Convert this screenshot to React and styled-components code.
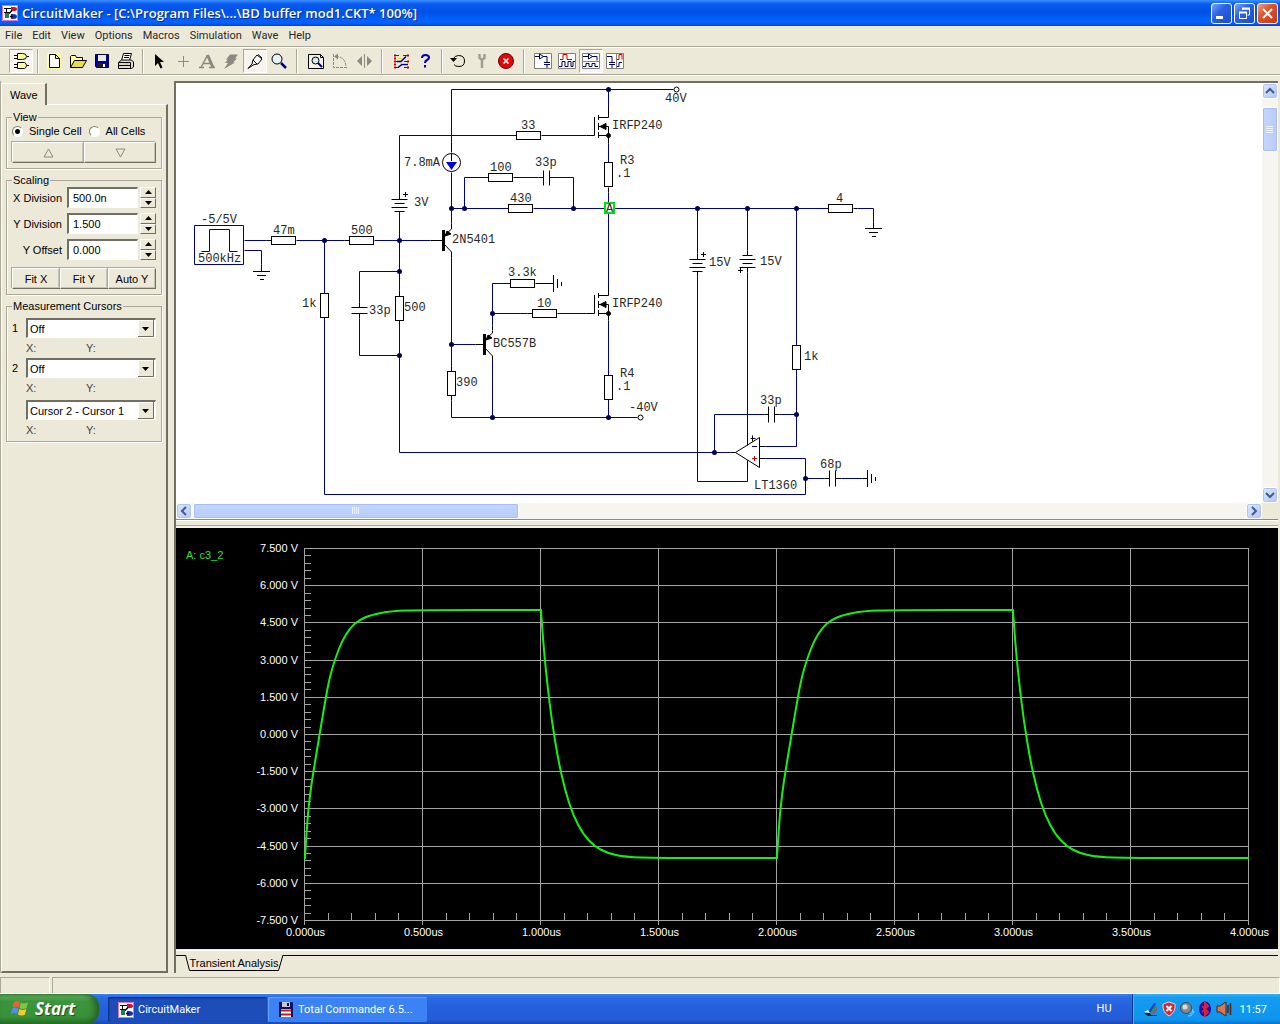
import React, { useState } from 'react';
import styled, { createGlobalStyle, css } from 'styled-components';

const GlobalStyle = createGlobalStyle`
  * { box-sizing: border-box; }
  body {
    margin: 0;
    background: #ece9d8;
    color: #000;
    font-family: "Liberation Sans", Arial, sans-serif;
    font-size: 11px;
  }
  button, input, select { font: inherit; color: inherit; }
`;

/* ---------- data ---------- */

const MENUS = ['File', 'Edit', 'View', 'Options', 'Macros', 'Simulation', 'Wave', 'Help'];

const WIRES = [
  'M451 142V89H673', 'M608 89V108', 'M451 172V223', 'M399 199V135H516', 'M541 135H586',
  'M464 208V177H488', 'M513 177H538', 'M549 177H573V208', 'M451 208H508', 'M533 208H604',
  'M614 208H828', 'M857 208H873V222', 'M608 143V162', 'M608 192V202', 'M608 213V290',
  'M608 320V375', 'M608 399V417', 'M451 417H637', 'M451 257V366', 'M451 400V417',
  'M244 240H266', 'M296 240H344', 'M374 240H430', 'M244 250H261V264', 'M399 211V290',
  'M399 320V452H730', 'M399 271H359V302', 'M359 318V355H399', 'M324 240V293',
  'M324 317V494H805V458H765', 'M492 325V283H510', 'M492 313H527', 'M557 313H586',
  'M451 344H475', 'M492 357V417', 'M697 208V253', 'M697 276V481H747V465',
  'M747 208V250', 'M747 272V440', 'M796 208V345', 'M796 369V446H765',
  'M714 452V414H764', 'M779 414H796', 'M805 478H824', 'M841 478H862',
];

const LEADS = [
  'M451 142V152', 'M451 223V228', 'M451 252V257', 'M430 240H443', 'M475 344H484',
  'M586 135H594', 'M586 313H594', 'M608 135V143', 'M608 187V192', 'M608 313V320',
  'M538 177H543', 'M266 240H271', 'M344 240H349', 'M261 264V271', 'M399 290V296',
  'M359 302V307', 'M359 313V318', 'M451 366V371', 'M451 395V400', 'M492 325V330',
  'M527 313H532', 'M535 283H553', 'M697 253V259', 'M697 271V276', 'M747 250V255',
  'M747 267V272', 'M747 440V445', 'M747 460V465', 'M730 452H736', 'M759 446H765',
  'M759 458H765', 'M764 414H768', 'M774 414H779', 'M824 478H829', 'M835 478H841',
  'M862 478H867', 'M853 208H857', 'M873 222V228',
];

const NODES = [
  [608, 89], [451, 208], [464, 208], [573, 208], [697, 208], [747, 208], [796, 208],
  [324, 240], [399, 240], [399, 271], [399, 355], [451, 344], [492, 313], [492, 417],
  [608, 417], [714, 452], [796, 414], [805, 478],
];

// top left corner of every resistor body
const FLAT_RESISTORS = [[516, 131], [488, 173], [508, 204], [828, 204], [271, 236], [349, 236], [510, 279], [532, 309]];
const TALL_RESISTORS = [[604, 162], [604, 375], [447, 371], [395, 296], [320, 293], [792, 345]];

const LABELS = [
  ['40V', 665, 102], ['33', 521, 129], ['IRFP240', 612, 129], ['7.8mA', 404, 166],
  ['R3', 620, 164], ['.1', 616, 177], ['100', 490, 171], ['33p', 535, 166],
  ['430', 510, 202], ['3V', 414, 206], ['47m', 273, 234], ['500', 351, 234],
  ['2N5401', 452, 243], ['-5/5V', 201, 223], ['500kHz', 198, 262], ['1k', 302, 307],
  ['33p', 369, 314], ['500', 404, 311], ['3.3k', 508, 276], ['10', 537, 307],
  ['IRFP240', 612, 307], ['BC557B', 493, 347], ['390', 456, 386], ['R4', 620, 377],
  ['.1', 616, 390], ['-40V', 629, 411], ['15V', 709, 266], ['15V', 760, 265],
  ['4', 836, 202], ['1k', 804, 360], ['33p', 760, 404], ['68p', 820, 468],
  ['LT1360', 754, 489],
];

const VOLTS = ['7.500 V', '6.000 V', '4.500 V', '3.000 V', '1.500 V', '0.000 V', '-1.500 V', '-3.000 V', '-4.500 V', '-6.000 V', '-7.500 V'];
const TIMES = ['0.000us', '0.500us', '1.000us', '1.500us', '2.000us', '2.500us', '3.000us', '3.500us', '4.000us'];

// one rise and one fall of the output, as offsets from the edge
const RISE = [[0, 858], [2, 824], [5, 794], [9, 768], [14, 738], [19, 708], [24, 680], [30, 659], [37, 641], [45, 628], [54, 620], [66, 615], [86, 611], [117, 610], [235, 610]];
const FALL = [[0, 610], [2, 640], [6, 682], [11, 722], [17, 759], [24, 790], [32, 815], [42, 834], [53, 846], [66, 853], [84, 857], [117, 858], [235, 858]];

/* ---------- toolbar icons ---------- */

const Icon = styled.svg`
  display: block;
  width: 20px;
  height: 20px;
  fill: none;
  stroke: #000;
`;

const ICONS = {
  gates: (
    <Icon viewBox="0 0 20 20">
      <path d="M6.5 2.5h5q4 0 4 3t-4 3h-5zM6.5 11.5h7q2 1 2 3t-2 3h-7z" fill="#ffffa0" />
      <path d="M3 4.5h3M3 7.5h3M16 5.5h2M3 13.5h3M3 16.5h3M16 14.5h2" />
    </Icon>
  ),
  new: (
    <Icon viewBox="0 0 20 20">
      <path d="M3 2h14v16H3z" fill="#ffff9c" stroke="none" />
      <path d="M5.5 3.5h6l4 4v9h-10zM11.5 3.5v4h4" fill="#fff" />
    </Icon>
  ),
  open: (
    <Icon viewBox="0 0 20 20">
      <path d="M2.5 16.5v-11l1-1h4l1 2h6v3" fill="#ffff9c" />
      <path d="M2.5 16.5l4-7h12l-4 7z" fill="#e8dc50" />
    </Icon>
  ),
  save: (
    <Icon viewBox="0 0 20 20">
      <path d="M3.5 3.5h13v13h-12l-1-1z" fill="#0000a0" stroke="#000040" />
      <path d="M6 4h8v6H6z" fill="#ece9d8" stroke="none" />
      <path d="M6 12h8v4H6z" fill="#202020" stroke="none" />
      <path d="M11 13h2v3h-2z" fill="#fff" stroke="none" />
    </Icon>
  ),
  print: (
    <Icon viewBox="0 0 20 20">
      <path d="M5.5 9.5l2-7h8l-2 7" fill="#fff" />
      <path d="M8.5 4.5h5M8 6.5h5" />
      <path d="M2.5 11.5l3-2.5h10l2 2v5l-2 1.5h-13zM2.5 11.5h12v6M3 14.5h11" fill="#dedac8" />
      <path d="M9 13h3" stroke="#d0c000" />
    </Icon>
  ),
  arrow: (
    <Icon viewBox="0 0 20 20">
      <path d="M6 3v12l3-3 2.5 5.5 2-1L11 11h4z" fill="#000" stroke="none" />
    </Icon>
  ),
  plus: <Icon viewBox="0 0 20 20"><path d="M10.5 5v11M5 10.5h11" stroke="#8c8a80" /></Icon>,
  text: (
    <Icon viewBox="0 0 20 20">
      <path d="M4 16.5L10.5 4M6.5 12.5h7M2 16.5h5M12 16.5h6" stroke="#8c8a80" strokeWidth="1.5" />
      <path d="M10.5 4L16 16.5" stroke="#8c8a80" strokeWidth="3" />
    </Icon>
  ),
  bolt: (
    <Icon viewBox="0 0 20 20">
      <path d="M9 3.5h8l-3 4h2l-4 4h2L3 18l4-6H4l3-3.5H5z" fill="#8c8a80" stroke="none" />
    </Icon>
  ),
  probe: (
    <Icon viewBox="0 0 20 20">
      <path d="M3 17.5l4-4.5 1-4 4-5 5 4-4 5-4 .5z" fill="#fff" />
      <path d="M13 3.5l4 3.5M8 9l4 4" />
    </Icon>
  ),
  zoom: (
    <Icon viewBox="0 0 20 20">
      <circle cx="8" cy="8" r="5" fill="#e2f4f4" />
      <path d="M12 12l5 5" stroke="#000090" strokeWidth="2.5" />
    </Icon>
  ),
  fit: (
    <Icon viewBox="0 0 20 20">
      <path d="M2.5 3.5h12l3 3v11h-15z" fill="#f4f2e8" />
      <circle cx="9.5" cy="9.5" r="3.5" fill="#d4ecec" />
      <path d="M12 12l4 4" stroke="#000080" strokeWidth="2" />
      <path d="M14.5 3.5v3h3" />
    </Icon>
  ),
  rotate: (
    <Icon viewBox="0 0 20 20">
      <path d="M3.5 3v13.5H18M6 5.5q9 0 10 10" stroke="#8c8a80" strokeDasharray="3 1" />
      <path d="M4 5.5l4-3v6z" fill="#8c8a80" stroke="none" />
    </Icon>
  ),
  mirror: (
    <Icon viewBox="0 0 20 20">
      <path d="M10.5 3v14" stroke="#8c8a80" />
      <path d="M8 5v10l-5-5zM13 5v10l5-5z" fill="#8c8a80" stroke="none" />
    </Icon>
  ),
  trace: (
    <Icon viewBox="0 0 20 20">
      <path d="M3 4.5h5M3 10.5h4M3 16.5h5M12 4.5h5M13 10.5h4M13 16.5h4" stroke="#a00000" />
      <path d="M6 10.5h4l5-5M7 16.5l4-3h6" stroke="#000090" strokeWidth="1.5" />
      <path d="M3 4.5h2M3 10.5h2M3 16.5h2M16 4.5h2M16 10.5h2M16 16.5h2M3 7.5h2M3 13.5h2" stroke="#c00000" strokeWidth="2" />
      <path d="M9 12.5h7M7 7.5h4" stroke="#f0d820" />
    </Icon>
  ),
  help: (
    <Icon viewBox="0 0 20 20">
      <path d="M7 7q0-3 3.5-3t3.5 2.5q0 1.5-2 2.5t-2 3" stroke="#0000b8" strokeWidth="2" />
      <path d="M9 14h2v2.5H9z" fill="#0000b8" stroke="none" />
    </Icon>
  ),
  undo: (
    <Icon viewBox="0 0 20 20">
      <path d="M5 8Q7 4.5 10.5 4.5q6 0 6 5.5t-5.5 5.5q-4 0-5-2" />
      <path d="M2 7h7l-3.5 4z" fill="#000" stroke="none" />
    </Icon>
  ),
  wrench: (
    <Icon viewBox="0 0 20 20">
      <path d="M7.5 3v4l2.5 2 2.5-2V3M10 9v8" stroke="#a09e92" strokeWidth="2.5" />
    </Icon>
  ),
  stop: (
    <Icon viewBox="0 0 20 20">
      <circle cx="10" cy="10" r="7.5" fill="#e00808" stroke="#600" />
      <path d="M7.5 7.5l5 5M12.5 7.5l-5 5" stroke="#fff" strokeWidth="1.5" />
    </Icon>
  ),
  viewCircuit: (
    <Icon viewBox="0 0 20 20">
      <path d="M1.5 2.5h17v15h-17z" fill="#fff" stroke="#808080" />
      <path d="M2 5.5h4M6.5 3v5l4-2.5zM10 5.5h4v6M11 11.5h6M11 13.5h6M14 14v3" stroke="#000060" />
    </Icon>
  ),
  viewWaves: (
    <Icon viewBox="0 0 20 20">
      <path d="M1.5 2.5h17v15h-17z" fill="#fff" stroke="#808080" />
      <path d="M3 8.5h3v-5h4v5h5" stroke="#c00000" />
      <path d="M2 15.5h3v-5h3v5h3v-5h3v5h2v-5h2" stroke="#000060" />
    </Icon>
  ),
  viewSplit: (
    <Icon viewBox="0 0 20 20">
      <path d="M1.5 2.5h17v15h-17zM1.5 10.5h17" fill="#fff" stroke="#808080" />
      <path d="M2 5.5h5M7.5 3v5l4-2.5zM11 5.5h5v4M2 15.5h3v-3h3v3h3v-3h3v3h3" stroke="#000060" />
    </Icon>
  ),
  viewColumns: (
    <Icon viewBox="0 0 20 20">
      <path d="M1.5 2.5h17v15h-17zM11.5 2.5v15" fill="#fff" stroke="#808080" />
      <path d="M2 5.5h5v6M4 11.5h6M4 13.5h6M7 14v3M12 15.5h2v-4h3" stroke="#000060" />
      <path d="M12 8.5h2v-5h3v5" stroke="#c00000" />
    </Icon>
  ),
};

// 'sep' is a divider, 'wide' is one with more room around it
const TOOLBAR = [
  ['gates', true], 'sep', ['new'], ['open'], ['save'], ['print'], 'sep', ['arrow'], ['plus'], ['text'],
  ['bolt'], ['probe', true], ['zoom'], 'wide', ['fit'], ['rotate'], ['mirror'], 'wide', ['trace'], ['help'],
  'sep', ['undo'], ['wrench'], ['stop'], 'wide', ['viewCircuit'], ['viewWaves'], ['viewSplit', true], ['viewColumns'],
];

const AppLogo = () => (
  <svg width="16" height="16" viewBox="0 0 16 16">
    <path d="M0 0h16v16H0z" fill="#fff" />
    <path d="M.5 .5h15v15H.5z" fill="none" stroke="#e070c8" />
    <path d="M2 3.5h9M4.5 3v10M2 7.5h5" stroke="#000" />
    <path d="M9 2h3q3 0 3 2t-3 2H9z" fill="#d01030" />
    <path d="M3 8h4v5H3z" fill="#208048" />
    <path d="M9 9h2q4 0 4 2.5T11 14H9z" fill="#1030c0" />
    <path d="M7 8.5l3-3M8 11.5h3" stroke="#000" strokeWidth="1.5" />
  </svg>
);

/* ---------- frame ---------- */

const Desktop = styled.div`
  display: flex;
  flex-direction: column;
  height: 100vh;
  overflow: hidden;
`;

const TitleBar = styled.header`
  display: flex;
  align-items: center;
  gap: 4px;
  height: 26px;
  padding: 0 2px;
  background: linear-gradient(#3a90ff 0, #0a5cf0 15%, #0050e4 45%, #0062fc 75%, #0660ff 88%, #0044d0 100%);
`;

const Title = styled.h1`
  flex: 1;
  margin: 0;
  color: #fff;
  font-family: "Open Sans", "Noto Sans", sans-serif;
  font-size: 13px;
  font-weight: 600;
  line-height: 24px;
  white-space: nowrap;
  text-shadow: 1px 1px 0 #0a2a90;
`;

const WindowButtons = styled.div`
  display: flex;
  gap: 2px;
`;

const WindowButton = styled.button`
  width: 21px;
  height: 21px;
  padding: 0;
  border: 1px solid #fff;
  border-radius: 3px;
  background: ${({ $close }) => ($close
    ? 'linear-gradient(135deg, #f0a088, #e0522c 40%, #c83c10)'
    : 'linear-gradient(135deg, #7ca4f8, #2c62e4 40%, #1a4cd0)')};

  svg { display: block; fill: none; stroke: #fff; }
`;

const MenuBar = styled.nav`
  display: flex;
  height: 20px;
  align-items: center;
`;

const MenuButton = styled.button`
  padding: 0 5px;
  border: 0;
  background: none;
  color: #282828;
  font-family: Roboto, sans-serif;
  font-size: 11px;
  line-height: 18px;
`;

const Toolbar = styled.div`
  display: flex;
  align-items: center;
  height: 30px;
  padding-left: 9px;
  border-top: 1px solid #aca899;
  border-bottom: 1px solid #fff;
  box-shadow: inset 0 1px 0 #fff, inset 0 -1px 0 #aca899;
`;

const ToolButton = styled.button`
  display: grid;
  place-items: center;
  flex: none;
  width: 24px;
  height: 24px;
  padding: 0;
  border: 1px solid transparent;
  background: none;

  ${({ $pressed }) => $pressed && css`
    border-color: #aca899 #fff #fff #aca899;
    background: #f6f4ec;
  `}
`;

const ToolDivider = styled.span`
  flex: none;
  width: 2px;
  height: 24px;
  margin: ${({ $wide }) => ($wide ? '0 6px 0 5px' : '0 3px 0 4px')};
  border-left: 1px solid #aca899;
  border-right: 1px solid #fff;
`;

const Main = styled.main`
  display: flex;
  flex: 1;
  min-height: 0;
  gap: 6px;
  padding: 5px 2px 3px 0;
`;

/* ---------- side panel ---------- */

const Side = styled.aside`
  display: flex;
  flex-direction: column;
  flex: none;
  width: 168px;
  padding-top: 2px;
  border-left: 1px solid #aca899;
`;

const SideTab = styled.button`
  align-self: flex-start;
  height: 22px;
  margin-bottom: -1px;
  padding: 0 7px 0 8px;
  border: solid;
  border-width: 1px 2px 0 1px;
  border-color: #fff #716f64 #fff #fff;
  background: #ece9d8;
  z-index: 1;
`;

const SideBody = styled.div`
  display: flex;
  flex-direction: column;
  flex: 1;
  gap: 5px;
  padding: 6px 4px 0;
  border: solid;
  border-width: 1px 2px 2px 1px;
  border-color: #fff #716f64 #716f64 #fff;
`;

const Group = styled.fieldset`
  min-width: 0;
  margin: 0;
  padding: 0 5px ${({ $tight }) => ($tight ? '1px' : '5px')};
  border: 1px solid #aca899;
  box-shadow: 1px 1px 0 #fff, inset 1px 0 0 #fff;

  legend {
    margin-bottom: 1px;
    padding: 0 1px;
    line-height: 12px;
  }
`;

const RadioRow = styled.div`
  display: flex;
  align-items: center;
  gap: 7px;
  height: 14px;
  margin-bottom: 4px;
`;

const RadioLabel = styled.label`
  display: flex;
  align-items: center;
  gap: 6px;
  white-space: nowrap;
`;

const Radio = styled.input`
  appearance: none;
  width: 11px;
  height: 11px;
  margin: 0;
  border: 1px solid;
  border-color: #808070 #fff #fff #808070;
  border-radius: 50%;
  background: #fff;

  &:checked { background: radial-gradient(circle, #000 2px, #fff 3px); }
`;

const ButtonRow = styled.div`
  display: flex;
`;

const PushButton = styled.button`
  flex: 1;
  height: 21px;
  padding: 0;
  border: 1px solid;
  border-color: #fff #716f64 #716f64 #fff;
  background: #ece9d8;
  box-shadow: -1px -1px 0 #aca899, inset -1px -1px 0 #c8c4b4;

  svg { display: block; margin: 0 auto; fill: none; stroke: #8c8a80; }
`;

const Field = styled.div`
  display: grid;
  grid-template-columns: 1fr 71px 16px;
  column-gap: 2px;
  align-items: center;
  margin-bottom: 5px;

  label {
    padding-right: 3px;
    text-align: right;
    white-space: nowrap;
  }
`;

const sunken = css`
  border: solid;
  border-width: 2px 1px 1px 2px;
  border-color: #716f64 #fff #fff #716f64;
  background: #fff;
`;

const TextBox = styled.input`
  width: 100%;
  height: 21px;
  padding: 0 4px;
  ${sunken}
`;

const Spinner = styled.div`
  display: grid;
  grid-template-rows: 1fr 1fr;
  height: 21px;

  button {
    padding: 0;
    border: 1px solid;
    border-color: #fff #716f64 #716f64 #fff;
    background: #ece9d8;
  }
  svg { display: block; margin: 0 auto; }
`;

const FitRow = styled(ButtonRow)`
  margin-top: 8px;
`;

const Cursor = styled.div`
  display: grid;
  grid-template-columns: 14px 1fr;
  align-items: center;

  &:first-of-type { margin-top: 5px; }
  &:last-of-type { margin-top: 2px; }
`;

const Combo = styled.div`
  display: grid;
  align-items: center;

  select, svg { grid-area: 1 / 1; }
  svg {
    justify-self: end;
    margin-right: 2px;
    pointer-events: none;
  }
`;

const Select = styled.select`
  appearance: none;
  width: 100%;
  height: 20px;
  padding: 0 2px;
  border-radius: 0;
  ${sunken}
`;

const Readout = styled.div`
  display: grid;
  grid-template-columns: 60px 1fr;
  grid-column: 2;
  line-height: 20px;
  color: #444;
`;

/* ---------- workspace ---------- */

const Workspace = styled.section`
  display: grid;
  flex: 1;
  min-width: 0;
  grid-template-rows: minmax(0, 1fr) 9px 421px 24px;
  border: solid #716f64;
  border-width: 2px 0 0 2px;
`;

const SchematicPane = styled.div`
  display: grid;
  grid-template-columns: minmax(0, 1fr) 16px;
  grid-template-rows: minmax(0, 1fr) 16px;
`;

const Sheet = styled.div`
  overflow: hidden;
  background: #fff;

  svg { display: block; }
  text {
    fill: #282828;
    font-family: "Liberation Mono", monospace;
    font-size: 12px;
  }
`;

const Scrollbar = styled.div`
  display: flex;
  flex-direction: ${({ $vertical }) => ($vertical ? 'column' : 'row')};
  background: #f6f5ef;
`;

const ScrollButton = styled.button`
  flex: none;
  width: 16px;
  height: 16px;
  padding: 0;
  border: 1px solid #fff;
  border-radius: 3px;
  background: linear-gradient(135deg, #dce6ff, #b4c8f6);
  box-shadow: inset 0 0 0 1px #b0c4f0;

  &:last-child { margin-${({ $vertical }) => ($vertical ? 'top' : 'left')}: auto; }
  svg { display: block; fill: none; stroke: #405c90; stroke-width: 2; }
`;

const Thumb = styled.div`
  display: grid;
  place-items: center;
  border: 1px solid #fff;
  border-radius: 2px;
  background: linear-gradient(${({ $vertical }) => ($vertical ? '90deg' : '180deg')}, #c4d6fe, #b8ccfa);
  box-shadow: inset 0 0 0 1px #a8bef0;
  ${({ $vertical }) => ($vertical
    ? css`height: 45px; margin-top: 8px;`
    : css`width: 30%; margin-left: 1px;`)}
`;

const Splitter = styled.div`
  border-top: 1px solid #8c8a7c;
  border-bottom: 2px solid #f4f2e8;
  box-shadow: inset 0 1px 0 #fff, inset 0 -1px 0 #aca899;
`;

const WavePane = styled.div`
  min-width: 0;
  background: #000;

  svg { display: block; width: 100%; height: 100%; }
`;

const ChartText = styled.text`
  fill: ${({ $color }) => $color || '#fff'};
  font-family: "Liberation Sans", Arial, sans-serif;
  font-size: 11px;
`;

const SheetTabs = styled.div`
  display: flex;
  margin-top: 6px;
  border-top: 1px solid #000;
  box-shadow: 0 -4px 0 #ece9d8, 0 -5px 0 #fff;
  background: #ece9d8;
`;

const SheetTab = styled.button`
  display: grid;
  align-self: flex-start;
  margin: -1px 0 0 9px;
  padding: 0;
  border: 0;
  background: none;

  svg, span { grid-area: 1 / 1; }
  span {
    line-height: 16px;
    text-align: center;
    white-space: nowrap;
  }
`;

const StatusBar = styled.footer`
  display: grid;
  grid-template-columns: 50px 1fr;
  gap: 2px;
  height: 18px;
  padding-top: 1px;
  border-bottom: 1px solid #fff;

  span {
    border-top: 1px solid #aca899;
    border-left: 1px solid #aca899;
    border-right: 1px solid #fff;
  }
`;

/* ---------- taskbar ---------- */

const TaskBar = styled.div`
  display: flex;
  align-items: stretch;
  height: 30px;
  color: #fff;
  font-family: Roboto, sans-serif;
  background: linear-gradient(#3a80f0 0, #2a6ae4 12%, #2560dc 50%, #245cd6 85%, #1c48ac 100%);
`;

const StartButton = styled.button`
  display: flex;
  align-items: center;
  gap: 5px;
  width: 99px;
  margin-right: 9px;
  padding: 0 0 2px 10px;
  border: 0;
  border-radius: 0 12px 12px 0;
  background: linear-gradient(#4aa04a 0, #5cb05c 8%, #3c943c 25%, #389238 75%, #2a742a 100%);
  box-shadow: inset -4px 0 6px #246024;
  font-family: "Open Sans", sans-serif;
  font-size: 17px;
  font-weight: 700;
  font-style: italic;
  text-shadow: 1px 1px 1px #1c4c1c;
`;

const TaskButton = styled.button`
  display: flex;
  align-items: center;
  gap: 4px;
  width: 159px;
  margin: 3px 1px 2px 0;
  padding: 0 10px;
  border: 0;
  border-radius: 2px;
  background: ${({ $active }) => ($active ? '#1c4db8' : '#3b82f4')};
  box-shadow: ${({ $active }) => ($active ? 'inset 1px 1px 2px #0c2c80' : 'inset 1px 1px 1px #6aa4ff')};
  white-space: nowrap;
`;

const Language = styled.span`
  margin-left: auto;
  padding-right: 20px;
  line-height: 29px;
`;

const Tray = styled.div`
  display: flex;
  align-items: center;
  gap: 2px;
  padding: 0 13px 0 10px;
  border-left: 1px solid #0c3c98;
  background: linear-gradient(#34b0fa 0, #149cf0 12%, #0e94ee 85%, #0c70c8 100%);
  box-shadow: inset 1px 0 0 #38b8ff;

  time { margin-left: 5px; }
`;

/* ---------- drawings ---------- */

const Triangle = ({ down }) => (
  <svg width="7" height="4" viewBox="0 0 7 4">
    <path d={down ? 'M0 0h7L3.5 4z' : 'M0 4h7L3.5 0z'} fill="#000" />
  </svg>
);

const Mosfet = ({ y }) => (
  <g>
    <path d={`M594.5 ${y}v18.5M598.5 ${y - 2}v5M598.5 ${y + 6}v7M598.5 ${y + 15}v6`} />
    <path d={`M598 ${y + 0.5}h10.5V${y - 10}M598 ${y + 9.5}h10.5v9H598`} />
    <path d={`M600 ${y + 9.5}l6-3v6z`} fill="#000" />
    <circle cx="608.5" cy={y + 18.5} r="2" fill="#000" />
  </g>
);

const Bjt = ({ x, y }) => (
  <g>
    <path d={`M${x + 0.5} ${y - 10}v21`} strokeWidth="3" />
    <path d={`M${x + 2} ${y - 5}l6.5-6v-2M${x + 2} ${y + 5}l6.5 7v3`} />
    <path d={`M${x + 2} ${y - 4}l2-5 4 3z`} fill="#000" />
  </g>
);

// plates run from top to bottom, the first one is wide unless flipped
const Battery = ({ x, y, flip }) => (
  <g>
    {[0, 4, 8, 12].map((dy, i) => {
      const half = (i % 2 === 0) !== Boolean(flip) ? 8 : 5;
      return <path key={dy} d={`M${x - half + 0.5} ${y + dy + 0.5}h${half * 2}`} />;
    })}
    <path d={flip ? `M${x - 9} ${y + 15.5}h5M${x - 6.5} ${y + 13}v5` : `M${x + 4} ${y - 4.5}h5M${x + 6.5} ${y - 7}v5`} />
  </g>
);

const Ground = ({ x, y, side }) => (
  <path d={side
    ? `M${x + 0.5} ${y - 8}v17M${x + 4.5} ${y - 4}v9M${x + 8.5} ${y - 1}v4`
    : `M${x - 8} ${y + 0.5}h17M${x - 4} ${y + 4.5}h9M${x - 1} ${y + 8.5}h4`}
  />
);

const Schematic = () => (
  <svg width="1086" height="419" viewBox="176 83 1086 419" role="img" aria-label="Buffer circuit">
    <g fill="none" stroke="#000088" transform="translate(.5 .5)">
      {WIRES.map((d) => <path key={d} d={d} />)}
      <path d="M194 225h49v39h-49zM201 251h8v-22h20v22h8" />
    </g>
    <g fill="none" stroke="#000" transform="translate(.5 .5)">
      {LEADS.map((d) => <path key={d} d={d} />)}
      {FLAT_RESISTORS.map(([x, y]) => <rect key={`${x}-${y}`} x={x} y={y} width="24" height="8" fill="#fff" />)}
      {TALL_RESISTORS.map(([x, y]) => <rect key={`${x}-${y}`} x={x} y={y} width="8" height="24" fill="#fff" />)}
      <path d="M543 170v15M549 170v15M351 307h16M351 313h16M768 406v16M774 406v16M829 470v16M835 470v16" />
      <path d="M759 437v30l-24-15z" fill="#fff" />
      <path d="M747 437v8M747 460v8M750 438h5M752 435v6" />
      <circle cx="676" cy="89" r="2.5" fill="#fff" />
      <circle cx="640" cy="417" r="2.5" fill="#fff" />
      <circle cx="451" cy="162" r="9" fill="#fff" />
    </g>
    <path d="M451.5 153v8" stroke="#000" />
    <path d="M446 162h11l-5.5 8z" fill="#0000d8" />
    <path d="M752 446.5h5" stroke="#000088" />
    <path d="M752 458.5h5M754.5 456v5" stroke="#c00000" />
    <g fill="none" stroke="#000">
      <Mosfet y={117} />
      <Mosfet y={295} />
      <Bjt x={443} y={240} />
      <Bjt x={484} y={344} />
      <Battery x={399} y={199} />
      <Battery x={697} y={259} />
      <Battery x={747} y={255} flip />
      <Ground x={261} y={271} />
      <Ground x={873} y={228} />
      <Ground x={553} y={283} side />
      <Ground x={867} y={478} side />
    </g>
    {NODES.map(([x, y]) => <circle key={`${x}-${y}`} cx={x + 0.5} cy={y + 0.5} r="2.5" fill="#000050" />)}
    {LABELS.map(([label, x, y]) => <text key={`${x}-${y}`} x={x} y={y}>{label}</text>)}
    <rect x="605" y="203" width="9" height="10" fill="#fff" stroke="#00e010" strokeWidth="2" />
    <text x="606" y="212">A</text>
  </svg>
);

// curves through the midpoints, so that the trace stays smooth between samples
const smooth = (points) => {
  const [first, ...rest] = points;
  const last = rest.pop();
  const parts = rest.map(([x, y], i) => {
    const [nx, ny] = rest[i + 1] || last;
    return `Q${x} ${y} ${(x + nx) / 2} ${(y + ny) / 2}`;
  });
  return `M${first.join(' ')}${parts.join('')}L${last.join(' ')}`;
};

const TRACES = [[305, RISE], [541, FALL], [777, RISE], [1013, FALL]]
  .map(([x0, shape]) => smooth(shape.map(([dx, y]) => [x0 + dx, y])));

const Waveform = () => {
  const gridY = (i) => Math.round(548 + i * 37.2) + 0.5;
  const gridX = (i) => 304.5 + i * 118;

  return (
    <svg viewBox="176 528 1102 421" preserveAspectRatio="xMinYMin meet" role="img" aria-label="Transient analysis of c3_2">
      <g stroke="#a4a4a4">
        {VOLTS.map((v, i) => <path key={v} d={`M304 ${gridY(i)}h945`} />)}
        {TIMES.map((t, i) => <path key={t} d={`M${gridX(i)} 548V925`} />)}
        {Array.from({ length: 50 }, (_, i) => (
          <path key={i} d={`M305 ${Math.round(548 + i * 7.44) + 0.5}h6`} />
        ))}
        {Array.from({ length: 40 }, (_, i) => (
          <path key={i} d={`M${Math.round(304 + i * 23.6) + 0.5} 913v7`} />
        ))}
      </g>
      {VOLTS.map((v, i) => <ChartText key={v} x="298" y={gridY(i) + 3.5} textAnchor="end">{v}</ChartText>)}
      {TIMES.map((t, i) => <ChartText key={t} x={gridX(i) + 1} y="936" textAnchor="middle">{t}</ChartText>)}
      <ChartText x="186" y="559" $color="#30e030">A: c3_2</ChartText>
      <g fill="none" stroke="#14f014" strokeWidth="2" strokeLinecap="square">
        {TRACES.map((d) => <path key={d} d={d} />)}
      </g>
    </svg>
  );
};

const TrayIcons = () => (
  <>
    <svg width="16" height="16" viewBox="0 0 16 16">
      <path d="M1 12h6l1 2h6v1H5z" fill="#222" />
      <path d="M5 11l6-9 2 1-6 9z" fill="#1838d0" />
      <path d="M7 12l6-8 1 2-6 6z" fill="#20a030" />
      <path d="M9 12l5-5v2l-4 4z" fill="#e03020" />
      <path d="M1 11l4-2 2 3z" fill="#fff" />
    </svg>
    <svg width="16" height="16" viewBox="0 0 16 16">
      <path d="M8 1l6 2q1 8-6 12Q1 11 2 3z" fill="#d02838" stroke="#f4d0d0" />
      <path d="M5.5 5l5 5M10.5 5l-5 5" stroke="#fff" strokeWidth="2" />
    </svg>
    <svg width="16" height="16" viewBox="0 0 16 16">
      <circle cx="7" cy="7" r="5.5" fill="#808890" stroke="#404850" />
      <circle cx="6" cy="6" r="2.5" fill="#d8dce0" />
      <path d="M11 13q3-1 3-5M9 15q5 0 6-5" fill="none" stroke="#90c8f8" />
    </svg>
    <svg width="16" height="16" viewBox="0 0 16 16">
      <ellipse cx="8" cy="8" rx="6" ry="7.5" fill="#1010b0" />
      <path d="M5 5l6 6-3 3V2l3 3-6 6" fill="none" stroke="#e02030" strokeWidth="2" />
    </svg>
    <svg width="18" height="16" viewBox="0 0 18 16">
      <path d="M2 5h3l6-4v14l-6-4H2z" fill="#d87850" stroke="#502010" />
      <path d="M13 4v8M15.5 2v12" stroke="#402820" strokeWidth="1.5" />
    </svg>
  </>
);

/* ---------- parts ---------- */

const ScalingField = ({ id, label, initial }) => {
  const [value, setValue] = useState(initial);
  return (
    <Field>
      <label htmlFor={id}>{label}</label>
      <TextBox id={id} value={value} onChange={(e) => setValue(e.target.value)} />
      <Spinner>
        <button aria-label={`${label} up`}><Triangle /></button>
        <button aria-label={`${label} down`}><Triangle down /></button>
      </Spinner>
    </Field>
  );
};

const CursorField = ({ id, label, value }) => (
  <Cursor>
    <label htmlFor={id} aria-label={label || 'Difference'}>{label}</label>
    <Combo>
      <Select id={id} defaultValue={value}><option>{value}</option></Select>
      <svg width="16" height="17" viewBox="0 0 16 17">
        <path d="M0 0h16v17H0z" fill="#ece9d8" />
        <path d="M.5 16V.5H15" fill="none" stroke="#fff" />
        <path d="M15.5 0v16.5H0" fill="none" stroke="#716f64" />
        <path d="M4 7h7l-3.5 4z" fill="#000" />
      </svg>
    </Combo>
    <Readout><span>X:</span><span>Y:</span></Readout>
  </Cursor>
);

const Arrow = ({ d, label, vertical }) => (
  <ScrollButton aria-label={label} $vertical={vertical}>
    <svg width="14" height="14" viewBox="0 0 14 14"><path d={d} /></svg>
  </ScrollButton>
);

const App = () => {
  const [cells, setCells] = useState('single');

  return (
    <Desktop>
      <GlobalStyle />
      <TitleBar>
        <AppLogo />
        <Title>{'CircuitMaker - [C:\\Program Files\\...\\BD buffer mod1.CKT* 100%]'}</Title>
        <WindowButtons>
          <WindowButton aria-label="Minimize">
            <svg width="19" height="19" viewBox="0 0 19 19"><path d="M4 13.5h7" strokeWidth="3" /></svg>
          </WindowButton>
          <WindowButton aria-label="Restore">
            <svg width="19" height="19" viewBox="0 0 19 19">
              <path d="M7.5 6V5h7v6h-2M4.5 8.5h7v6h-7z" />
              <path d="M4 8.5h8M7 4.5h8" strokeWidth="2" />
            </svg>
          </WindowButton>
          <WindowButton aria-label="Close" $close>
            <svg width="19" height="19" viewBox="0 0 19 19"><path d="M5 5l9 9M14 5l-9 9" strokeWidth="2" /></svg>
          </WindowButton>
        </WindowButtons>
      </TitleBar>

      <MenuBar>
        {MENUS.map((name) => <MenuButton key={name}>{name}</MenuButton>)}
      </MenuBar>

      <Toolbar>
        {TOOLBAR.map((item, i) => (
          typeof item === 'string'
            ? <ToolDivider key={i} $wide={item === 'wide'} />
            : <ToolButton key={i} aria-label={item[0]} $pressed={item[1]}>{ICONS[item[0]]}</ToolButton>
        ))}
      </Toolbar>

      <Main>
        <Side>
          <SideTab>Wave</SideTab>
          <SideBody>
            <Group>
              <legend>View</legend>
              <RadioRow>
                <RadioLabel>
                  <Radio type="radio" name="cells" checked={cells === 'single'} onChange={() => setCells('single')} />
                  Single Cell
                </RadioLabel>
                <RadioLabel>
                  <Radio type="radio" name="cells" checked={cells === 'all'} onChange={() => setCells('all')} />
                  All Cells
                </RadioLabel>
              </RadioRow>
              <ButtonRow>
                <PushButton aria-label="Previous cell">
                  <svg width="11" height="10" viewBox="0 0 11 10"><path d="M1 9h9L5.5 1z" /></svg>
                </PushButton>
                <PushButton aria-label="Next cell">
                  <svg width="11" height="10" viewBox="0 0 11 10"><path d="M1 1h9L5.5 9z" /></svg>
                </PushButton>
              </ButtonRow>
            </Group>

            <Group>
              <legend>Scaling</legend>
              <ScalingField id="xdiv" label="X Division" initial="500.0n" />
              <ScalingField id="ydiv" label="Y Division" initial="1.500" />
              <ScalingField id="yoff" label="Y Offset" initial="0.000" />
              <FitRow>
                <PushButton>Fit X</PushButton>
                <PushButton>Fit Y</PushButton>
                <PushButton>Auto Y</PushButton>
              </FitRow>
            </Group>

            <Group $tight>
              <legend>Measurement Cursors</legend>
              <CursorField id="cursor1" label="1" value="Off" />
              <CursorField id="cursor2" label="2" value="Off" />
              <CursorField id="cursorDiff" label="" value="Cursor 2 - Cursor 1" />
            </Group>
          </SideBody>
        </Side>

        <Workspace>
          <SchematicPane>
            <Sheet><Schematic /></Sheet>
            <Scrollbar $vertical>
              <Arrow label="Scroll up" vertical d="M3 9l4-4 4 4" />
              <Thumb $vertical>
                <svg width="8" height="8" viewBox="0 0 8 8"><path d="M0 .5h7M0 2.5h7M0 4.5h7M0 6.5h7" stroke="#eef4ff" /></svg>
              </Thumb>
              <Arrow label="Scroll down" vertical d="M3 5l4 4 4-4" />
            </Scrollbar>
            <Scrollbar>
              <Arrow label="Scroll left" d="M9 3L5 7l4 4" />
              <Thumb>
                <svg width="8" height="8" viewBox="0 0 8 8"><path d="M.5 0v7M2.5 0v7M4.5 0v7M6.5 0v7" stroke="#eef4ff" /></svg>
              </Thumb>
              <Arrow label="Scroll right" d="M5 3l4 4-4 4" />
            </Scrollbar>
          </SchematicPane>
          <Splitter />
          <WavePane><Waveform /></WavePane>
          <SheetTabs>
            <SheetTab>
              <svg width="98" height="16" viewBox="0 0 98 16">
                <path d="M0 0h98l-5 15.5H5z" fill="#ece9d8" />
                <path d="M.5 0l4 15.5h89L98 0" fill="none" stroke="#000" />
              </svg>
              <span>Transient Analysis</span>
            </SheetTab>
          </SheetTabs>
        </Workspace>
      </Main>

      <StatusBar><span /><span /></StatusBar>

      <TaskBar>
        <StartButton>
          <svg width="20" height="20" viewBox="0 0 20 20">
            <path d="M4 4q3-2 6 0L8.5 9.5q-3-2-6 0z" fill="#f06030" />
            <path d="M11 4.5q3 2 7 0L16.5 10q-3 2-7 0z" fill="#80c840" />
            <path d="M2.3 10.5q3-2 6 0L7 16q-3-2-6 0z" fill="#5090f0" />
            <path d="M9.3 11q3 2 7 0L15 16.5q-3 2-7 0z" fill="#f8c830" />
          </svg>
          Start
        </StartButton>
        <TaskButton $active><AppLogo />CircuitMaker</TaskButton>
        <TaskButton>
          <svg width="16" height="16" viewBox="0 0 16 16">
            <path d="M1 0h13l1 1v14H1z" fill="#101060" />
            <path d="M4 0h8v5H4z" fill="#c8c8d0" />
            <path d="M9 1h2v3H9z" fill="#101060" />
            <path d="M3 7h10v8H3z" fill="#fff" />
            <path d="M3 8.5h10M3 12.5h10" stroke="#c02020" strokeWidth="2" />
          </svg>
          Total Commander 6.5...
        </TaskButton>
        <Language>HU</Language>
        <Tray>
          <TrayIcons />
          <time>11:57</time>
        </Tray>
      </TaskBar>
    </Desktop>
  );
};

export default App;
